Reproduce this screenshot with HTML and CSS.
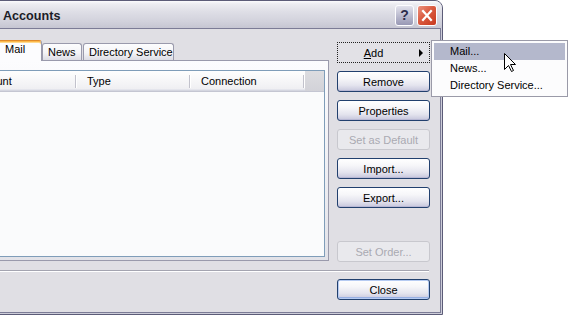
FILE: index.html
```html
<!DOCTYPE html>
<html>
<head>
<meta charset="utf-8">
<title>Internet Accounts</title>
<link rel="stylesheet" href="styles.css">
</head>
<body>
<div class="window">
  <div class="titlebar">
    <span class="title">Accounts</span>
    <div class="caption-btns">
      <span class="cap help">?</span>
      <span class="cap close"><svg width="18" height="19" viewBox="0 0 18 19"><path d="M5 5 L13 14 M13 5 L5 14" stroke="#fff" stroke-width="2.2" stroke-linecap="square"/></svg></span>
    </div>
  </div>
  <div class="client">
    <div class="main">
      <div class="tabctl">
        <div class="tabs">
          <span class="tab tab-all">All</span>
          <span class="tab tab-mail active">Mail</span>
          <span class="tab tab-news">News</span>
          <span class="tab tab-dir">Directory Service</span>
        </div>
        <div class="panel">
          <div class="list">
            <div class="lhead">
              <span class="col col-acc">Account</span>
              <span class="col col-type">Type</span>
              <span class="col col-conn">Connection</span>
              <span class="col-fill"></span>
            </div>
          </div>
        </div>
      </div>
      <div class="btncol">
        <button class="btn btn-add"><span class="add-label"><u>A</u>dd</span><span class="arrow"></span></button>
        <button class="btn">Remove</button>
        <button class="btn">Properties</button>
        <button class="btn disabled">Set as Default</button>
        <button class="btn">Import...</button>
        <button class="btn">Export...</button>
        <button class="btn disabled btn-order">Set Order...</button>
      </div>
    </div>
    <div class="sep"></div>
    <div class="foot">
      <button class="btn btn-default">Close</button>
    </div>
  </div>
</div>
<div class="menu">
  <div class="mi hot">Mail...</div>
  <div class="mi">News...</div>
  <div class="mi">Directory Service...</div>
</div>
<svg class="cursor" width="13" height="20" viewBox="0 0 13 20"><path d="M0.5 0.5 L0.5 16.5 L4.5 12.5 L7.5 18.5 L9.5 17.5 L6.5 11.5 L11.5 11.5 Z" fill="#fff" stroke="#000" stroke-width="1"/></svg>
</body>
</html>
```

FILE: styles.css
```css
* { box-sizing: border-box; }

body {
  margin: 0;
  background: #fff;
  overflow: hidden;
  width: 568px;
  height: 315px;
  font-family: "Liberation Sans", Arial, sans-serif;
  font-size: 11px;
  color: #000;
}

.window {
  margin-left: -59px;
  width: 502px;
  height: 315px;
  border: 1px solid #5c5c78;
  border-radius: 8px 8px 0 0;
  background: #cdcdd9;
  display: flex;
  flex-direction: column;
  overflow: hidden;
}

.titlebar {
  height: 27px;
  flex: none;
  display: flex;
  align-items: flex-start;
  padding-left: 61px;
  background: linear-gradient(#fbfbfd 0, #ececf1 3px, #dedee6 40%, #d2d2dc 75%, #c6c6d2 100%);
}

.title {
  font-weight: bold;
  font-size: 12.6px;
  line-height: 15px;
  margin-top: 8px;
  color: #1c1c28;
}

.caption-btns {
  margin-left: auto;
  margin-right: 5px;
  margin-top: 4px;
  display: flex;
  gap: 3px;
}

.cap {
  height: 21px;
  border: 1px solid #fdfdff;
  border-radius: 3px;
  display: flex;
  align-items: center;
  justify-content: center;
}

.help {
  width: 19px;
  background: linear-gradient(#e2e2ec, #bcbcd0 50%, #9898b4);
  color: #2e2e4c;
  font-weight: bold;
  font-size: 14px;
  line-height: 19px;
}

.close {
  width: 20px;
  background: linear-gradient(135deg, #ec9480, #da5a40 45%, #c8381e);
}

.close svg { display: block; }

.client {
  flex: 1;
  margin: 0 1px 1px 1px;
  border: 1px solid #7c7c96;
  background: #e0dfe4;
  padding: 11px 10px 0 8px;
  display: flex;
  flex-direction: column;
}

.main {
  display: flex;
  gap: 8px;
  height: 222px;
  align-items: flex-start;
}

.tabctl {
  width: 377px;
  display: flex;
  flex-direction: column;
}

.tabs {
  height: 20px;
  display: flex;
  align-items: flex-end;
}

.tab {
  height: 17px;
  border: 1px solid #9a9aac;
  border-bottom: none;
  border-radius: 3px 3px 0 0;
  padding: 2px 0 0 5px;
  line-height: 13px;
  white-space: nowrap;
  background: linear-gradient(#fdfdfe, #f4f4f7 55%, #dcdce4);
}

.tab-all { margin-left: 2px; width: 43px; }
.tab-news { width: 40px; }
.tab-dir { margin-left: 1px; width: 91px; }

.tab.active {
  width: 45px;
  height: 21px;
  margin-bottom: -1px;
  padding: 2px 0 0 7px;
  position: relative;
  z-index: 1;
  border-top: 1px solid #e08a2a;
  box-shadow: inset 0 1px 0 #fcb84a, inset 0 2px 0 #ffd98e;
  background: #fcfcfe;
}

.panel {
  height: 201px;
  border: 1px solid #9a9aac;
  padding: 9px 3px 3px 8px;
  background: linear-gradient(#fcfcfe, #eeeef2 60%, #e2e2e8);
}

.list {
  height: 187px;
  border: 1px solid #7f9db9;
  background: #fafbfc;
}

.lhead {
  height: 21px;
  display: flex;
  background: linear-gradient(#fefefe, #f4f4f6 60%, #ececf0);
  box-shadow: inset 0 -1px 0 #c4c6d2, inset 0 -2px 0 #d4d6e0, inset 0 -3px 0 #e4e5ec;
}

.col {
  line-height: 20px;
  padding-left: 10px;
  white-space: nowrap;
  overflow: hidden;
  background:
    linear-gradient(#c2c2cc, #c2c2cc) right 1px top 4px / 1px 13px no-repeat,
    linear-gradient(#ffffff, #ffffff) right 0 top 4px / 1px 13px no-repeat;
}

.col-acc { width: 115px; }
.col-type { width: 114px; }
.col-conn { width: 114px; }

.col-fill {
  flex: 1;
  background: linear-gradient(#dcdce0, #d2d2d8);
  box-shadow: inset 0 -1px 0 #c4c6d2;
}

.btncol {
  width: 93px;
  height: 222px;
  padding-top: 2px;
  display: flex;
  flex-direction: column;
  gap: 8px;
}

.btn {
  width: 93px;
  height: 21px;
  padding: 0;
  margin: 0;
  font-family: "Liberation Sans", Arial, sans-serif;
  font-size: 11px;
  color: #000;
  border: 1px solid #22406e;
  border-radius: 3px;
  background: linear-gradient(#ffffff, #f6f6f9 35%, #e4e4ee 70%, #c6c6dc);
  box-shadow: inset 0 -1px 0 #b8b8d4;
  line-height: 18px;
}

.btn.disabled {
  color: #a9a9b2;
  border-color: #c8c8ce;
  background: #e9e9ed;
  box-shadow: none;
}

.btn-order { margin-top: auto; }

.btn-add {
  border: 1px dotted #202020;
  border-radius: 0;
  background: #e2e1e6;
  box-shadow: none;
  display: flex;
  align-items: center;
}

.add-label {
  flex: 1;
  text-align: center;
  padding-left: 2px;
}

.arrow {
  width: 0;
  height: 0;
  border-left: 4px solid #000;
  border-top: 4px solid transparent;
  border-bottom: 4px solid transparent;
  margin-right: 6px;
  margin-left: 12px;
}

.btn-default {
  box-shadow: inset 0 0 0 1px #b6cbf2, inset 0 -2px 0 #98b0e4;
}

.sep {
  height: 2px;
  margin-top: 8px;
  margin-right: 1px;
  border-top: 1px solid #a4a4b0;
  border-bottom: 1px solid #ffffff;
}

.foot {
  margin-top: 7px;
  display: flex;
  justify-content: flex-end;
}

.menu {
  position: absolute;
  left: 431px;
  top: 40px;
  width: 137px;
  border: 1px solid #9a9aa8;
  background: #fcfcfd;
  padding: 2px;
}

.mi {
  height: 17px;
  line-height: 16px;
  padding-left: 16px;
  white-space: nowrap;
}

.mi.hot { background: #b4b8cc; }

.cursor {
  position: absolute;
  left: 504px;
  top: 53px;
}
```
